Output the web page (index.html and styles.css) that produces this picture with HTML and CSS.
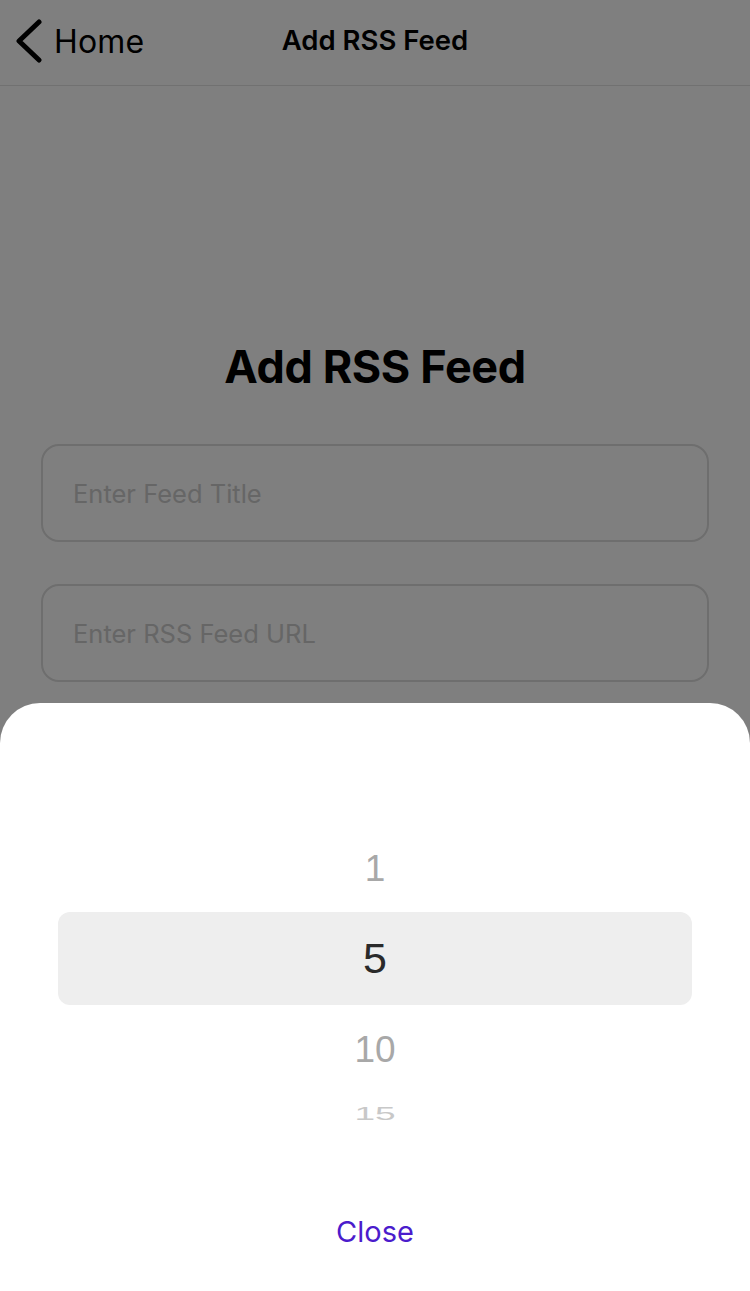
FILE: index.html
```html
<!DOCTYPE html>
<html lang="en">
<head>
<meta charset="utf-8">
<title>Add RSS Feed</title>
<link rel="stylesheet" href="styles.css">
</head>
<body>
<div class="screen">
  <header class="nav">
    <div class="back">
      <svg class="chev" width="30" height="44" viewBox="0 0 30 44" aria-hidden="true">
        <path d="M25 3 L5 22 L25 41" fill="none" stroke="#000" stroke-width="5" stroke-linecap="round" stroke-linejoin="round"/>
      </svg>
      <span class="back-label">Home</span>
    </div>
    <div class="nav-title">Add RSS Feed</div>
  </header>
  <main class="content">
    <h1 class="title">Add RSS Feed</h1>
    <div class="field">Enter Feed Title</div>
    <div class="field">Enter RSS Feed URL</div>
  </main>
  <div class="dim"></div>
  <section class="sheet">
    <div class="wheel">
      <div class="item near first">1</div>
      <div class="item selected">5</div>
      <div class="item near">10</div>
      <div class="item far">15</div>
    </div>
    <div class="close">Close</div>
  </section>
</div>
</body>
</html>
```
FILE: styles.css
```css
html, body {
  margin: 0;
  padding: 0;
}
body {
  font-family: Inter, "Noto Sans", "Liberation Sans", sans-serif;
  background: #fff;
  color: #000;
}
.screen {
  position: relative;
  width: 750px;
  height: 1291px;
  overflow: hidden;
  background: #fff;
}
.nav {
  height: 85px;
  border-bottom: 1px solid #e2e2e2;
  display: flex;
  align-items: center;
  position: relative;
}
.back {
  display: flex;
  align-items: center;
  padding-left: 14px;
  gap: 10px;
  margin-top: -3px;
}
.chev {
  display: block;
}
.back-label {
  font-size: 32px;
  font-weight: 400;
  letter-spacing: 0.2px;
}
.nav-title {
  position: absolute;
  left: 0;
  right: 0;
  top: 0;
  height: 80px;
  display: flex;
  align-items: center;
  justify-content: center;
  font-size: 27.5px;
  font-weight: 600;
  pointer-events: none;
}
.content {
  padding: 255px 41px 0 41px;
  display: flex;
  flex-direction: column;
  gap: 42px;
}
.title {
  margin: 0 0 9px 0;
  text-align: center;
  font-size: 45px;
  font-weight: 700;
  line-height: 52px;
  letter-spacing: -0.4px;
}
.field {
  box-sizing: border-box;
  height: 98px;
  border: 2px solid #dcdcdc;
  border-radius: 18px;
  display: flex;
  align-items: center;
  padding-left: 30px;
  font-size: 25.5px;
  color: #cccccc;
}
.dim {
  position: absolute;
  inset: 0;
  background: rgba(0, 0, 0, 0.5);
}
.sheet {
  position: absolute;
  left: 0;
  right: 0;
  top: 703px;
  bottom: 0;
  background: #fff;
  border-radius: 40px 40px 0 0;
  display: flex;
  flex-direction: column;
  align-items: center;
}
.wheel {
  margin-top: 123px;
  width: 634px;
  display: flex;
  flex-direction: column;
  align-items: center;
}
.item {
  width: 100%;
  height: 89px;
  display: flex;
  align-items: center;
  justify-content: center;
  font-family: "Liberation Sans", Arial, sans-serif;
  font-size: 37px;
  color: #a8a8a8;
}
.item.first {
  height: 86px;
}
.item.selected {
  height: 93px;
  background: #eeeeee;
  border-radius: 12px;
  color: #2a2a2a;
  font-size: 43px;
}
.item.far {
  height: 40px;
  color: #c8c8c8;
  transform: scaleY(0.5);
  transform-origin: center;
}
.close {
  margin-top: 80px;
  font-size: 29px;
  color: #4b1ccc;
}
```
